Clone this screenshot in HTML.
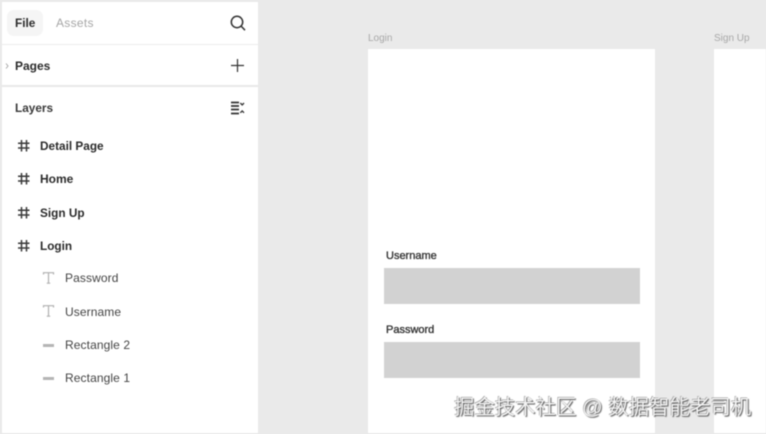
<!DOCTYPE html>
<html><head><meta charset="utf-8">
<style>
html,body{margin:0;padding:0}
body{width:766px;height:434px;overflow:hidden;background:#eaeaea;position:relative;font-family:"Liberation Sans","Noto Sans CJK SC",sans-serif}
#w{position:absolute;left:0;top:0;width:766px;height:434px;filter:blur(.4px)}
.a{position:absolute}
.t{position:absolute;white-space:nowrap;line-height:16px;font-size:12px;color:#2b2b2b}
.b{font-weight:700}
svg{position:absolute;overflow:visible}
</style></head><body>
<div id="w">
<div class="a" style="left:2px;top:2px;width:256px;height:431px;background:#fff"></div>
<div class="a" style="left:2px;top:44px;width:256px;height:1px;background:#ececec"></div>
<div class="a" style="left:2px;top:85px;width:256px;height:2px;background:#e8e8e8"></div>
<div class="a" style="left:7px;top:10px;width:36px;height:26px;border-radius:7px;background:#f5f5f5"></div>
<div class="t b" style="left:15px;top:15px;font-size:11.8px">File</div>
<div class="t" style="left:56px;top:15px;color:#a6a6a6;font-size:12px;letter-spacing:.3px">Assets</div>
<svg style="left:230px;top:15px" width="16" height="16" fill="none" stroke="#333" stroke-width="1.5"><circle cx="7" cy="7" r="5.7"/><path d="M11 11l4 4.2"/></svg>
<svg style="left:5px;top:62px" width="5" height="8" fill="none" stroke="#aaa" stroke-width="1"><path d="M1 1.5l2 2.5L1 6.5"/></svg>
<div class="t b" style="left:15px;top:58px">Pages</div>
<svg style="left:231px;top:59px" width="13" height="13" fill="none" stroke="#333" stroke-width="1.2"><path d="M6.5 0v13M0 6.5h13"/></svg>
<div class="t b" style="left:15px;top:100px;color:#3a3a3a;font-size:11.8px">Layers</div>
<svg style="left:230px;top:101px" width="14" height="14" fill="none" stroke="#333"><path d="M1 1.5h8M1 5h8M1 8.5h8M1 12.5h8" stroke-width="1.8"/><path d="M10.3 2l1.9 1.9L14 2M10.3 11.8l1.9-1.9 1.8 1.9" stroke-width="1.3"/></svg>

<svg style="left:18px;top:140px" width="12" height="12" fill="none" stroke="#3a3a3a" stroke-width="1.5"><path d="M3.5 0v11.5M8.5 0v11.5M0 3.2h11.5M0 8h11.5"/></svg>
<div class="t b" style="left:40px;top:138px;font-size:11.8px">Detail Page</div>
<svg style="left:18px;top:173px" width="12" height="12" fill="none" stroke="#3a3a3a" stroke-width="1.5"><path d="M3.5 0v11.5M8.5 0v11.5M0 3.2h11.5M0 8h11.5"/></svg>
<div class="t b" style="left:40px;top:171px;font-size:12px">Home</div>
<svg style="left:18px;top:207px" width="12" height="12" fill="none" stroke="#3a3a3a" stroke-width="1.5"><path d="M3.5 0v11.5M8.5 0v11.5M0 3.2h11.5M0 8h11.5"/></svg>
<div class="t b" style="left:40px;top:205px;font-size:11.8px">Sign Up</div>
<svg style="left:18px;top:240px" width="12" height="12" fill="none" stroke="#3a3a3a" stroke-width="1.5"><path d="M3.5 0v11.5M8.5 0v11.5M0 3.2h11.5M0 8h11.5"/></svg>
<div class="t b" style="left:40px;top:238px;font-size:11.8px">Login</div>

<svg style="left:43px;top:272px" width="12" height="12" fill="none" stroke="#b0b0b0" stroke-width="1.2"><path d="M.5 2.5V.7h10v1.8M5.5.7v10.5M3.8 11.2h3.4"/></svg>
<div class="t" style="left:65px;top:270px;color:#444;letter-spacing:.1px">Password</div>
<svg style="left:43px;top:305px" width="12" height="12" fill="none" stroke="#b0b0b0" stroke-width="1.2"><path d="M.5 2.5V.7h10v1.8M5.5.7v10.5M3.8 11.2h3.4"/></svg>
<div class="t" style="left:65px;top:304px;color:#444;letter-spacing:.1px">Username</div>
<div class="a" style="left:43px;top:344px;width:11px;height:3px;background:#b5b5b5"></div>
<div class="t" style="left:65px;top:337px;color:#444;letter-spacing:.1px">Rectangle 2</div>
<div class="a" style="left:43px;top:377px;width:11px;height:3px;background:#b5b5b5"></div>
<div class="t" style="left:65px;top:370px;color:#444;letter-spacing:.1px">Rectangle 1</div>

<div class="t" style="left:368px;top:31px;font-size:10px;color:#a8a8a8">Login</div>
<div class="t" style="left:714px;top:31px;font-size:10px;color:#a8a8a8">Sign Up</div>
<div class="a" style="left:368px;top:49px;width:287px;height:384px;background:#fff"></div>
<div class="a" style="left:714px;top:49px;width:52px;height:384px;background:#fff"></div>
<div class="t" style="left:386px;top:248px;font-size:11px;color:#333;-webkit-text-stroke:.35px #333">Username</div>
<div class="a" style="left:384px;top:268px;width:256px;height:36px;background:#d2d2d2"></div>
<div class="t" style="left:386px;top:322px;font-size:11px;color:#333;-webkit-text-stroke:.35px #333">Password</div>
<div class="a" style="left:384px;top:342px;width:256px;height:36px;background:#d2d2d2"></div>
<div class="t" style="left:454px;top:396px;line-height:24px;font-size:20.4px;color:#f4f4f4;text-shadow:1px 1px 1px #555,-.5px -.5px .5px #888">掘金技术社区 @ 数据智能老司机</div>
</div>
</body></html>
